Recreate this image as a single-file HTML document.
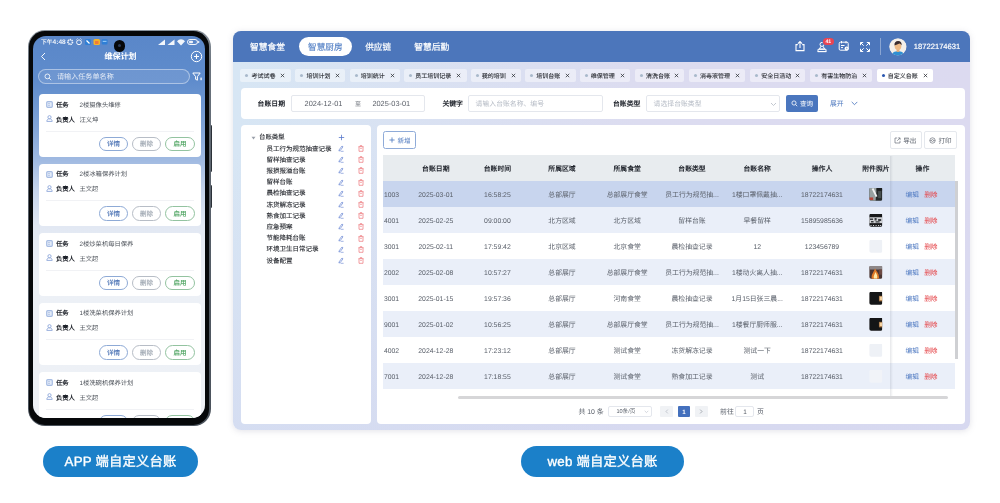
<!DOCTYPE html>
<html lang="zh-CN">
<head>
<meta charset="utf-8">
<title>自定义台账</title>
<style>
*{box-sizing:border-box;margin:0;padding:0}
html,body{width:1000px;height:503px;overflow:hidden;background:#fff;font-family:"Liberation Sans",sans-serif;text-rendering:geometricPrecision;-webkit-font-smoothing:antialiased}
body{position:relative}
.abs{position:absolute}
/* ---------- phone ---------- */
#phone{position:absolute;left:28px;top:30px;width:182.6px;height:396px;border-radius:17px;background:linear-gradient(180deg,#8a939c 0%,#6b747e 8%,#565e68 50%,#4a525b 100%);}
#bezel{position:absolute;left:1.2px;top:1.4px;right:1.2px;bottom:1.4px;border-radius:15.8px;background:#06080a}
#screen{position:absolute;left:5px;top:6px;width:172px;height:382px;border-radius:13px;overflow:hidden;
 background:linear-gradient(180deg,#5a87c9 0px,#5f8ccc 45px,#6a94d0 62px,#84a6d8 95px,#9fb9e1 123px,#c6d4eb 155px,#e2e8f3 190px,#ecf0f6 240px,#eef1f6 382px);}
#screen .t{position:absolute;white-space:nowrap;line-height:1;z-index:2}
#screen,#web,.pill{will-change:transform}
.card{position:absolute;left:6px;width:162.4px;height:62.5px;background:#fff;border-radius:4px;}
.card .t{position:absolute;white-space:nowrap;line-height:1;font-size:6.3px}
.card .lb{font-weight:bold;color:#1d2129;left:17px}
.card .vl{color:#5a6068;left:40.5px}
.card .dv{position:absolute;left:7px;right:7.5px;top:36.7px;height:1px;background:#f1f2f5}
.pb{position:absolute;top:42.5px;height:14.5px;border-radius:8px;border:1px solid;background:#fff}
.pb.b1{left:59.9px;width:29.3px;border-color:#8eaad6;color:#4a72b4}
.pb.b2{left:93px;width:29px;border-color:#b7bdc6;color:#9aa3ae}
.pb.b3{left:126px;width:30px;border-color:#93c3a0;color:#46a05a}
.pill{position:absolute;height:31px;border-radius:16px;background:#1b80c9;color:#fff;font-size:13.3px;text-align:center;line-height:31px;letter-spacing:0.2px;-webkit-text-stroke:.35px #fff}
/* ---------- web ---------- */
#web{position:absolute;left:233px;top:31px;width:737px;height:398.5px;border-radius:8px;overflow:hidden;
 background:linear-gradient(180deg,rgba(212,216,240,0) 30%,rgba(212,216,240,.62) 100%),linear-gradient(90deg,#d7e6f4 0%,#dcdcf0 55%,#dcdaf0 100%);box-shadow:0 1px 6px rgba(125,125,150,.22)}
#whead{position:absolute;left:0;top:0;width:100%;height:31px;background:#4c76bb}
#web .t{position:absolute;white-space:nowrap;line-height:1}
.nav{color:#fff;font-size:8.8px;top:11.5px}
.chip{position:absolute;top:37.6px;height:13.2px;border-radius:2px;background:rgba(255,255,255,.45);font-size:5.8px;color:#3a3f48;line-height:13px;white-space:nowrap}
.chip i{position:absolute;left:5.1px;top:5.2px;width:3px;height:3px;border-radius:50%;background:#a9b9cb}
.chip span{position:absolute;left:11.2px;top:1.1px}
.chip svg{position:absolute;right:5.2px;top:4px}
.wcard{position:absolute;background:#fff;border-radius:4px}
.flb{font-weight:bold;font-size:6.6px;color:#1d2129}
.inp{position:absolute;border:1px solid #e4e7ed;border-radius:2px;background:#fff}
.ph{color:#b4bac4;font-size:6px}
.tree{font-size:6.4px;color:#23262c;-webkit-text-stroke:.1px #23262c}
.th{font-weight:bold;font-size:6.8px;color:#1d2129;text-align:center}
.row{position:absolute;left:6.5px;width:572px;height:26px}
.row .c{position:absolute;top:9.5px;font-size:6.9px;color:#5b616b;line-height:1;white-space:nowrap;text-align:center;transform:translateX(-50%)}
.row .id{position:absolute;left:0;top:9.5px;font-size:6.9px;color:#5b616b;line-height:1}
.row .ed{position:absolute;left:529px;top:9.5px;font-size:6.4px;color:#4a76c0;line-height:1}
.row .de{position:absolute;left:547.5px;top:9.5px;font-size:6.4px;color:#e5474b;line-height:1}
.thumb{position:absolute;left:485.5px;top:6px;width:14px;height:14px;border-radius:1.5px;overflow:hidden}
</style>
</head>
<body>

<!-- ================= PHONE ================= -->
<div id="sidebtn" style="position:absolute;left:209px;top:125px;width:2.9px;height:47px;border-radius:1.2px;background:#2b3138"></div>
<div style="position:absolute;left:209px;top:185px;width:2.9px;height:23px;border-radius:1.2px;background:#2b3138"></div>
<div id="phone">
 <div id="bezel"></div>
 <div id="screen">
  <div id="pcontent">
<div class="t" style="left:8.0px;top:4.0px;font-size:5.80px;color:#fff;font-weight:bold;opacity:.92">下午<span style="font-size:6.5px">4:48</span></div>
<svg class="abs" style="left:33px;top:2.2px" width="45" height="8" viewBox="0 0 45 8">
<circle cx="4.2" cy="4" r="2.3" fill="none" stroke="#fff" stroke-width="1.7" stroke-dasharray="1.3 0.55" opacity=".9"/>
<circle cx="13" cy="4.3" r="2.4" fill="none" stroke="#fff" stroke-width="1" opacity=".9"/><path d="M10.5 1.5l1-1M15.5 1.5l-1-1" stroke="#fff" stroke-width=".9" opacity=".9"/>
<rect x="19" y="1" width="6" height="6" rx="1.5" fill="#2f7fd6"/><path d="M20.5 2.5l3 3" stroke="#fff" stroke-width="1.2"/>
<rect x="27.5" y="1" width="6.5" height="6" rx="1.5" fill="#f4b428"/><rect x="29" y="3" width="3.5" height="3" fill="#f07a3a"/>
<rect x="35.700" y="1.2" width="5.800" height="5.300" rx="1" fill="#2f7fd6"/><rect x="36.700" y="2.800" width="3.800" height="1.200" fill="#8cc4f5"/>
</svg>
<svg class="abs" style="left:124px;top:1.8px" width="44" height="8" viewBox="0 0 44 8">
<path d="M1 7h7V1.5z" fill="#fff" opacity=".92"/><path d="M10.5 7h7V1.5z" fill="#fff" opacity=".92"/>
<path d="M20 3.2a5.2 5.2 0 0 1 8 0l-4 4.3z" fill="#fff" opacity=".92"/>
<rect x="30.5" y="1.5" width="10" height="5" rx="2.5" fill="none" stroke="#fff" stroke-width="1" opacity=".92"/><rect x="32" y="2.8" width="4" height="2.4" rx="1" fill="#fff" opacity=".9"/><rect x="41.2" y="3" width="1" height="2" fill="#fff"/>
</svg>
<div class="abs" style="left:80.5px;top:4px;width:11.5px;height:11.5px;border-radius:50%;background:#05070a"></div>
<div class="abs" style="left:84.7px;top:8.2px;width:3px;height:3px;border-radius:50%;background:#2a3a55"></div>
<svg class="abs" style="left:7px;top:16px" width="7" height="9" viewBox="0 0 7 9"><path d="M5 1L1.5 4.5 5 8" fill="none" stroke="#fff" stroke-width="1" opacity=".95"/></svg>
<div class="t" style="left:87.5px;top:17.0px;font-size:8.00px;transform:translateX(-50%);color:#fff;font-weight:bold">维保计划</div>
<svg class="abs" style="left:157px;top:13.7px" width="13" height="13" viewBox="0 0 13 13"><circle cx="6.5" cy="6.5" r="5.2" fill="none" stroke="#fff" stroke-width="1"/><path d="M6.5 4v5M4 6.5h5" stroke="#fff" stroke-width="1.1"/></svg>
<div class="abs" style="left:5px;top:32.5px;width:152px;height:15.5px;border-radius:8px;border:1px solid rgba(255,255,255,.42);background:rgba(255,255,255,.10)"></div>
<svg class="abs" style="left:11px;top:36.5px" width="8" height="8" viewBox="0 0 8 8"><circle cx="3.4" cy="3.4" r="2.4" fill="none" stroke="#fff" stroke-width=".9" opacity=".9"/><path d="M5.2 5.2l2 2" stroke="#fff" stroke-width=".9" opacity=".9"/></svg>
<div class="t" style="left:24.0px;top:38.0px;font-size:7.10px;color:#fff;opacity:.8">请输入任务单名称</div>
<svg class="abs" style="left:158.5px;top:35.5px" width="11" height="10" viewBox="0 0 11 10"><path d="M0.8 1h7.4L5.4 4.6v3.6l-1.8-.9V4.6z" fill="none" stroke="#fff" stroke-width="1" stroke-linejoin="round"/><rect x="8.3" y="5.6" width="1.6" height="2.6" fill="#fff" opacity=".8"/></svg>
<div class="card" style="top:58.0px"><svg class="abs" style="left:7px;top:7px" width="7" height="7" viewBox="0 0 7 7"><rect x=".7" y=".7" width="5.600" height="5.600" rx="1" fill="#e3ebf8" stroke="#a6bce3" stroke-width="1.200"/><path d="M2.300 2.600h1.400M2.300 4.400h1.400" stroke="#8aa5d6" stroke-width=".7"/></svg><svg class="abs" style="left:7px;top:21.3px" width="7" height="7" viewBox="0 0 7 7"><circle cx="3.5" cy="2.2" r="1.600" fill="none" stroke="#93acdc" stroke-width=".95"/><path d="M.8 6.400c.2-2 1.200-2.600 2.700-2.600s2.500.6 2.700 2.600z" fill="none" stroke="#93acdc" stroke-width=".95"/></svg><div class="dv"></div><div class="pb b1"></div><div class="pb b2"></div><div class="pb b3"></div></div>
<div class="t" style="left:23.0px;top:67.0px;font-size:6.30px;font-weight:bold;color:#1d2129">任务</div>
<div class="t" style="left:46.5px;top:67.0px;font-size:6.30px;color:#4b5058">2楼摄像头维修</div>
<div class="t" style="left:23.0px;top:82.0px;font-size:6.30px;font-weight:bold;color:#1d2129">负责人</div>
<div class="t" style="left:46.5px;top:82.0px;font-size:6.30px;color:#4b5058">汪义坤</div>
<div class="t" style="left:80.4px;top:106.0px;font-size:6.50px;transform:translateX(-50%);color:#4a72b4;-webkit-text-stroke:.15px #4a72b4">详情</div>
<div class="t" style="left:113.5px;top:106.0px;font-size:6.50px;transform:translateX(-50%);color:#98a1ac;-webkit-text-stroke:.12px #98a1ac">删除</div>
<div class="t" style="left:147.0px;top:106.0px;font-size:6.50px;transform:translateX(-50%);color:#46a05a;-webkit-text-stroke:.15px #46a05a">启用</div>
<div class="card" style="top:127.5px"><svg class="abs" style="left:7px;top:7px" width="7" height="7" viewBox="0 0 7 7"><rect x=".7" y=".7" width="5.600" height="5.600" rx="1" fill="#e3ebf8" stroke="#a6bce3" stroke-width="1.200"/><path d="M2.300 2.600h1.400M2.300 4.400h1.400" stroke="#8aa5d6" stroke-width=".7"/></svg><svg class="abs" style="left:7px;top:21.3px" width="7" height="7" viewBox="0 0 7 7"><circle cx="3.5" cy="2.2" r="1.600" fill="none" stroke="#93acdc" stroke-width=".95"/><path d="M.8 6.400c.2-2 1.200-2.600 2.700-2.600s2.500.6 2.700 2.600z" fill="none" stroke="#93acdc" stroke-width=".95"/></svg><div class="dv"></div><div class="pb b1"></div><div class="pb b2"></div><div class="pb b3"></div></div>
<div class="t" style="left:23.0px;top:136.0px;font-size:6.30px;font-weight:bold;color:#1d2129">任务</div>
<div class="t" style="left:46.5px;top:136.0px;font-size:6.30px;color:#4b5058">2楼冰箱保养计划</div>
<div class="t" style="left:23.0px;top:151.0px;font-size:6.30px;font-weight:bold;color:#1d2129">负责人</div>
<div class="t" style="left:46.5px;top:151.0px;font-size:6.30px;color:#4b5058">王文超</div>
<div class="t" style="left:80.4px;top:176.0px;font-size:6.50px;transform:translateX(-50%);color:#4a72b4;-webkit-text-stroke:.15px #4a72b4">详情</div>
<div class="t" style="left:113.5px;top:176.0px;font-size:6.50px;transform:translateX(-50%);color:#98a1ac;-webkit-text-stroke:.12px #98a1ac">删除</div>
<div class="t" style="left:147.0px;top:176.0px;font-size:6.50px;transform:translateX(-50%);color:#46a05a;-webkit-text-stroke:.15px #46a05a">启用</div>
<div class="card" style="top:197.0px"><svg class="abs" style="left:7px;top:7px" width="7" height="7" viewBox="0 0 7 7"><rect x=".7" y=".7" width="5.600" height="5.600" rx="1" fill="#e3ebf8" stroke="#a6bce3" stroke-width="1.200"/><path d="M2.300 2.600h1.400M2.300 4.400h1.400" stroke="#8aa5d6" stroke-width=".7"/></svg><svg class="abs" style="left:7px;top:21.3px" width="7" height="7" viewBox="0 0 7 7"><circle cx="3.5" cy="2.2" r="1.600" fill="none" stroke="#93acdc" stroke-width=".95"/><path d="M.8 6.400c.2-2 1.200-2.600 2.700-2.600s2.500.6 2.700 2.600z" fill="none" stroke="#93acdc" stroke-width=".95"/></svg><div class="dv"></div><div class="pb b1"></div><div class="pb b2"></div><div class="pb b3"></div></div>
<div class="t" style="left:23.0px;top:206.0px;font-size:6.30px;font-weight:bold;color:#1d2129">任务</div>
<div class="t" style="left:46.5px;top:206.0px;font-size:6.30px;color:#4b5058">2楼炒菜机每日保养</div>
<div class="t" style="left:23.0px;top:221.0px;font-size:6.30px;font-weight:bold;color:#1d2129">负责人</div>
<div class="t" style="left:46.5px;top:221.0px;font-size:6.30px;color:#4b5058">王文超</div>
<div class="t" style="left:80.4px;top:245.0px;font-size:6.50px;transform:translateX(-50%);color:#4a72b4;-webkit-text-stroke:.15px #4a72b4">详情</div>
<div class="t" style="left:113.5px;top:245.0px;font-size:6.50px;transform:translateX(-50%);color:#98a1ac;-webkit-text-stroke:.12px #98a1ac">删除</div>
<div class="t" style="left:147.0px;top:245.0px;font-size:6.50px;transform:translateX(-50%);color:#46a05a;-webkit-text-stroke:.15px #46a05a">启用</div>
<div class="card" style="top:266.5px"><svg class="abs" style="left:7px;top:7px" width="7" height="7" viewBox="0 0 7 7"><rect x=".7" y=".7" width="5.600" height="5.600" rx="1" fill="#e3ebf8" stroke="#a6bce3" stroke-width="1.200"/><path d="M2.300 2.600h1.400M2.300 4.400h1.400" stroke="#8aa5d6" stroke-width=".7"/></svg><svg class="abs" style="left:7px;top:21.3px" width="7" height="7" viewBox="0 0 7 7"><circle cx="3.5" cy="2.2" r="1.600" fill="none" stroke="#93acdc" stroke-width=".95"/><path d="M.8 6.400c.2-2 1.200-2.600 2.700-2.600s2.500.6 2.700 2.600z" fill="none" stroke="#93acdc" stroke-width=".95"/></svg><div class="dv"></div><div class="pb b1"></div><div class="pb b2"></div><div class="pb b3"></div></div>
<div class="t" style="left:23.0px;top:275.0px;font-size:6.30px;font-weight:bold;color:#1d2129">任务</div>
<div class="t" style="left:46.5px;top:275.0px;font-size:6.30px;color:#4b5058">1楼洗菜机保养计划</div>
<div class="t" style="left:23.0px;top:290.0px;font-size:6.30px;font-weight:bold;color:#1d2129">负责人</div>
<div class="t" style="left:46.5px;top:290.0px;font-size:6.30px;color:#4b5058">王文超</div>
<div class="t" style="left:80.4px;top:315.0px;font-size:6.50px;transform:translateX(-50%);color:#4a72b4;-webkit-text-stroke:.15px #4a72b4">详情</div>
<div class="t" style="left:113.5px;top:315.0px;font-size:6.50px;transform:translateX(-50%);color:#98a1ac;-webkit-text-stroke:.12px #98a1ac">删除</div>
<div class="t" style="left:147.0px;top:315.0px;font-size:6.50px;transform:translateX(-50%);color:#46a05a;-webkit-text-stroke:.15px #46a05a">启用</div>
<div class="card" style="top:336.0px"><svg class="abs" style="left:7px;top:7px" width="7" height="7" viewBox="0 0 7 7"><rect x=".7" y=".7" width="5.600" height="5.600" rx="1" fill="#e3ebf8" stroke="#a6bce3" stroke-width="1.200"/><path d="M2.300 2.600h1.400M2.300 4.400h1.400" stroke="#8aa5d6" stroke-width=".7"/></svg><svg class="abs" style="left:7px;top:21.3px" width="7" height="7" viewBox="0 0 7 7"><circle cx="3.5" cy="2.2" r="1.600" fill="none" stroke="#93acdc" stroke-width=".95"/><path d="M.8 6.400c.2-2 1.200-2.600 2.700-2.600s2.500.6 2.700 2.600z" fill="none" stroke="#93acdc" stroke-width=".95"/></svg><div class="dv"></div><div class="pb b1"></div><div class="pb b2"></div><div class="pb b3"></div></div>
<div class="t" style="left:23.0px;top:345.0px;font-size:6.30px;font-weight:bold;color:#1d2129">任务</div>
<div class="t" style="left:46.5px;top:345.0px;font-size:6.30px;color:#4b5058">1楼洗碗机保养计划</div>
<div class="t" style="left:23.0px;top:360.0px;font-size:6.30px;font-weight:bold;color:#1d2129">负责人</div>
<div class="t" style="left:46.5px;top:360.0px;font-size:6.30px;color:#4b5058">王文超</div>
</div><!--/pcontent-->
 </div>
</div>
<div class="pill" style="left:42.5px;top:446px;width:155px">APP 端自定义台账</div>

<!-- ================= WEB ================= -->
<div id="web">
<div id="whead"></div>
<div class="t " style="left:17.0px;top:12.0px;font-size:8.75px;color:#fff;-webkit-text-stroke:.2px #fff">智慧食堂</div>
<div class="abs" style="left:65.5px;top:6.4px;width:53px;height:19px;border-radius:10px;background:#fff"></div>
<div class="t " style="left:75.0px;top:12.0px;font-size:8.65px;color:#5b86c8;-webkit-text-stroke:.15px #5b86c8">智慧厨房</div>
<div class="t " style="left:132.2px;top:12.0px;font-size:8.65px;color:#fff;-webkit-text-stroke:.2px #fff">供应链</div>
<div class="t " style="left:181.2px;top:12.0px;font-size:8.75px;color:#fff;-webkit-text-stroke:.2px #fff">智慧后勤</div>
<svg class="abs" style="left:561.0px;top:9.0px" width="12" height="12" viewBox="0 0 12 12"><path d="M3.8 4.6H2v6h8v-6H8.2" fill="none" stroke="#fff" stroke-width="1.1"/><path d="M6 8V1.6M3.9 3.6L6 1.5l2.1 2.1" fill="none" stroke="#fff" stroke-width="1.1"/></svg>
<svg class="abs" style="left:582.5px;top:9.5px" width="12" height="12" viewBox="0 0 12 12"><circle cx="6" cy="3.4" r="2" fill="none" stroke="#fff" stroke-width="1"/><path d="M5 5.2L3.4 8h5.2L7 5.2" fill="none" stroke="#fff" stroke-width="1"/><path d="M1.5 10.6h9M2 8.3h8v2.3H2z" fill="none" stroke="#fff" stroke-width="1"/></svg>
<div class="abs" style="left:590.0px;top:6.5px;width:10.6px;height:7.4px;border-radius:3.7px;background:#ea4452;box-shadow:0 0 0 .6px #4c76bb"></div>
<div class="t " style="left:595.3px;top:9.0px;font-size:5.20px;transform:translateX(-50%);color:#fff;font-weight:bold">41</div>
<svg class="abs" style="left:604.8px;top:9.1px" width="12" height="12" viewBox="0 0 12 12"><rect x="1.2" y="2.2" width="9" height="8" rx="1.2" fill="none" stroke="#fff" stroke-width="1"/><path d="M3.5 1v2.4M8 1v2.4M3 5.5h3.5M3 7.6h2" stroke="#fff" stroke-width="1"/><circle cx="8.6" cy="8.6" r="2" fill="#fff"/><path d="M8.6 7.7v1h.8" stroke="#4c76bb" stroke-width=".6" fill="none"/></svg>
<svg class="abs" style="left:626.2px;top:9.5px" width="12" height="12" viewBox="0 0 12 12"><path d="M1.5 4.2V1.5h2.7M7.8 1.5h2.7v2.7M10.5 7.8v2.7H7.8M4.2 10.5H1.5V7.8" fill="none" stroke="#fff" stroke-width="1"/><path d="M1.7 1.7l3 3M10.3 1.7l-3 3M10.3 10.3l-3-3M1.7 10.3l3-3" stroke="#fff" stroke-width="1"/></svg>
<div class="abs" style="left:647.0px;top:7.0px;width:1px;height:17px;background:rgba(255,255,255,.35)"></div>
<svg class="abs" style="left:655.8px;top:6.6px;clip-path:circle(8.800px at 9px 9px)" width="18" height="18" viewBox="0 0 18 18"><circle cx="9" cy="9" r="8.8" fill="#f4efe9"/><g><path d="M2.5 18.5c0-4 3-5.2 6.5-5.2s6.5 1.2 6.5 5.2z" fill="#2f8fd2"/><rect x="7.6" y="10.5" width="2.8" height="3.4" fill="#e6ad78"/><ellipse cx="9" cy="8.2" rx="3.3" ry="3.8" fill="#edb985"/><path d="M5.5 7.6c-.4-3 1.2-4.6 3.6-4.6 2.6 0 4 1.700 3.500 4.600-.5-1.300-1.200-2-2.200-2.200-1.300.7-3.300 1-4.900 2.200z" fill="#3a2c2e"/></g></svg>
<div class="t " style="left:680.8px;top:12.0px;font-size:7.60px;color:#fff;-webkit-text-stroke:.18px #fff">18722174631</div>
<div class="chip" style="left:7.4px;width:50.2px;"><i></i><svg width="5" height="5" viewBox="0 0 5 5"><path d="M.8 .8l3.400 3.400M4.200 .8L.8 4.200" stroke="#2a2d33" stroke-width=".75"/></svg></div>
<div class="t " style="left:18.6px;top:43.0px;font-size:6.00px;color:#22252b;-webkit-text-stroke:.08px #22252b">考试试卷</div>
<div class="chip" style="left:62.2px;width:50.2px;"><i></i><svg width="5" height="5" viewBox="0 0 5 5"><path d="M.8 .8l3.400 3.400M4.200 .8L.8 4.200" stroke="#2a2d33" stroke-width=".75"/></svg></div>
<div class="t " style="left:73.4px;top:43.0px;font-size:6.00px;color:#22252b;-webkit-text-stroke:.08px #22252b">培训计划</div>
<div class="chip" style="left:116.6px;width:50.4px;"><i></i><svg width="5" height="5" viewBox="0 0 5 5"><path d="M.8 .8l3.400 3.400M4.200 .8L.8 4.200" stroke="#2a2d33" stroke-width=".75"/></svg></div>
<div class="t " style="left:127.8px;top:43.0px;font-size:6.00px;color:#22252b;-webkit-text-stroke:.08px #22252b">培训统计</div>
<div class="chip" style="left:171.0px;width:62.6px;"><i></i><svg width="5" height="5" viewBox="0 0 5 5"><path d="M.8 .8l3.400 3.400M4.200 .8L.8 4.200" stroke="#2a2d33" stroke-width=".75"/></svg></div>
<div class="t " style="left:182.2px;top:43.0px;font-size:6.00px;color:#22252b;-webkit-text-stroke:.08px #22252b">员工培训记录</div>
<div class="chip" style="left:237.6px;width:50.4px;"><i></i><svg width="5" height="5" viewBox="0 0 5 5"><path d="M.8 .8l3.400 3.400M4.200 .8L.8 4.200" stroke="#2a2d33" stroke-width=".75"/></svg></div>
<div class="t " style="left:248.8px;top:43.0px;font-size:6.00px;color:#22252b;-webkit-text-stroke:.08px #22252b">我的培训</div>
<div class="chip" style="left:292.0px;width:50.6px;"><i></i><svg width="5" height="5" viewBox="0 0 5 5"><path d="M.8 .8l3.400 3.400M4.200 .8L.8 4.200" stroke="#2a2d33" stroke-width=".75"/></svg></div>
<div class="t " style="left:303.2px;top:43.0px;font-size:6.00px;color:#22252b;-webkit-text-stroke:.08px #22252b">培训台账</div>
<div class="chip" style="left:346.6px;width:50.4px;"><i></i><svg width="5" height="5" viewBox="0 0 5 5"><path d="M.8 .8l3.400 3.400M4.200 .8L.8 4.200" stroke="#2a2d33" stroke-width=".75"/></svg></div>
<div class="t " style="left:357.8px;top:43.0px;font-size:6.00px;color:#22252b;-webkit-text-stroke:.08px #22252b">维保管理</div>
<div class="chip" style="left:401.8px;width:49.2px;"><i></i><svg width="5" height="5" viewBox="0 0 5 5"><path d="M.8 .8l3.400 3.400M4.200 .8L.8 4.200" stroke="#2a2d33" stroke-width=".75"/></svg></div>
<div class="t " style="left:413.0px;top:43.0px;font-size:6.00px;color:#22252b;-webkit-text-stroke:.08px #22252b">清洗台账</div>
<div class="chip" style="left:455.8px;width:56.0px;"><i></i><svg width="5" height="5" viewBox="0 0 5 5"><path d="M.8 .8l3.400 3.400M4.200 .8L.8 4.200" stroke="#2a2d33" stroke-width=".75"/></svg></div>
<div class="t " style="left:467.0px;top:43.0px;font-size:6.00px;color:#22252b;-webkit-text-stroke:.08px #22252b">消毒液管理</div>
<div class="chip" style="left:517.0px;width:55.0px;"><i></i><svg width="5" height="5" viewBox="0 0 5 5"><path d="M.8 .8l3.400 3.400M4.200 .8L.8 4.200" stroke="#2a2d33" stroke-width=".75"/></svg></div>
<div class="t " style="left:528.2px;top:43.0px;font-size:6.00px;color:#22252b;-webkit-text-stroke:.08px #22252b">安全日活动</div>
<div class="chip" style="left:577.0px;width:62.0px;"><i></i><svg width="5" height="5" viewBox="0 0 5 5"><path d="M.8 .8l3.400 3.400M4.200 .8L.8 4.200" stroke="#2a2d33" stroke-width=".75"/></svg></div>
<div class="t " style="left:588.2px;top:43.0px;font-size:6.00px;color:#22252b;-webkit-text-stroke:.08px #22252b">有害生物防治</div>
<div class="chip" style="left:643.6px;width:56.4px;background:#fff;"><i style="background:#2a57b0"></i><svg width="5" height="5" viewBox="0 0 5 5"><path d="M.8 .8l3.400 3.400M4.200 .8L.8 4.200" stroke="#2a2d33" stroke-width=".75"/></svg></div>
<div class="t " style="left:654.8px;top:43.0px;font-size:6.00px;color:#22252b;-webkit-text-stroke:.08px #22252b">自定义台账</div>
<div class="wcard" style="left:7.5px;top:57.2px;width:724.5px;height:30.4px"></div>
<div class="t flb" style="left:24.6px;top:71.0px;font-size:6.85px;">台账日期</div>
<div class="inp" style="left:57.6px;top:64.0px;width:134px;height:16.6px"></div>
<div class="t " style="left:71.6px;top:69.0px;font-size:7.40px;color:#5a5f68">2024-12-01</div>
<div class="t " style="left:125.0px;top:71.0px;font-size:6.00px;transform:translateX(-50%);color:#70757d">至</div>
<div class="t " style="left:139.4px;top:69.0px;font-size:7.40px;color:#5a5f68">2025-03-01</div>
<div class="t flb" style="left:209.4px;top:71.0px;font-size:6.85px;">关键字</div>
<div class="inp" style="left:235.4px;top:64.0px;width:134.6px;height:16.6px"></div>
<div class="t ph" style="left:242.6px;top:71.0px;font-size:6.85px;">请输入台账名称、编号</div>
<div class="t flb" style="left:380.0px;top:71.0px;font-size:6.85px;">台账类型</div>
<div class="inp" style="left:413.2px;top:64.0px;width:134.2px;height:16.6px"></div>
<div class="t ph" style="left:420.6px;top:71.0px;font-size:6.85px;">请选择台账类型</div>
<svg class="abs" style="left:537.0px;top:70.6px" width="7" height="5" viewBox="0 0 7 5"><path d="M1 1l2.500 2.500L6 1" fill="none" stroke="#b4bac4" stroke-width=".8"/></svg>
<div class="abs" style="left:553.4px;top:64.0px;width:32px;height:16.6px;border-radius:2px;background:#4a76be"></div>
<svg class="abs" style="left:558.0px;top:69.2px" width="7" height="7" viewBox="0 0 7 7"><circle cx="3" cy="3" r="2.1" fill="none" stroke="#fff" stroke-width=".8"/><path d="M4.6 4.6l1.6 1.600" stroke="#fff" stroke-width=".8"/></svg>
<div class="t " style="left:567.0px;top:71.0px;font-size:6.60px;color:#fff">查询</div>
<div class="t " style="left:597.0px;top:71.0px;font-size:6.80px;color:#4a76be">展开</div>
<svg class="abs" style="left:617.5px;top:70.4px" width="7" height="5" viewBox="0 0 7 5"><path d="M.7 .9L3.500 3.700 6.300 .9" fill="none" stroke="#4a76be" stroke-width=".85"/></svg>
<div class="wcard" style="left:7.5px;top:94.0px;width:130.5px;height:299px"></div>
<svg class="abs" style="left:17.7px;top:104.6px" width="5" height="4" viewBox="0 0 5 4"><path d="M.5 .7h4L2.500 3.400z" fill="#9aa0aa"/></svg>
<div class="t tree" style="left:26.0px;top:104.0px;font-size:6.40px;">台账类型</div>
<svg class="abs" style="left:105.0px;top:103.0px" width="7" height="7" viewBox="0 0 7 7"><path d="M3.500 .8v5.400M.8 3.500h5.400" stroke="#5878cc" stroke-width=".8"/></svg>
<div class="t tree" style="left:33.6px;top:116.0px;font-size:6.50px;">员工行为规范抽查记录</div>
<svg class="abs" style="left:105.2px;top:113.9px" width="6" height="7" viewBox="0 0 6 7"><path d="M1.200 4.800L4 1l1 .8-2.800 3.800-1.300.4z" fill="none" stroke="#5273cc" stroke-width=".62" stroke-linejoin="round"/><path d="M2.600 6.300h3" stroke="#5273cc" stroke-width=".55"/></svg>
<svg class="abs" style="left:124.6px;top:113.9px" width="6" height="7" viewBox="0 0 6 7"><path d="M.4 1.700h5.200M2.200 1.600V.6h1.600v1" fill="none" stroke="#e8595d" stroke-width=".58"/><path d="M1 1.800v4.500h4V1.800" fill="none" stroke="#e8595d" stroke-width=".58"/><path d="M2.200 3.500h1.600" stroke="#e8595d" stroke-width=".5"/></svg>
<div class="t tree" style="left:33.6px;top:127.0px;font-size:6.50px;">留样抽查记录</div>
<svg class="abs" style="left:105.2px;top:125.1px" width="6" height="7" viewBox="0 0 6 7"><path d="M1.200 4.800L4 1l1 .8-2.800 3.800-1.300.4z" fill="none" stroke="#5273cc" stroke-width=".62" stroke-linejoin="round"/><path d="M2.600 6.300h3" stroke="#5273cc" stroke-width=".55"/></svg>
<svg class="abs" style="left:124.6px;top:125.1px" width="6" height="7" viewBox="0 0 6 7"><path d="M.4 1.700h5.200M2.200 1.600V.6h1.600v1" fill="none" stroke="#e8595d" stroke-width=".58"/><path d="M1 1.800v4.500h4V1.800" fill="none" stroke="#e8595d" stroke-width=".58"/><path d="M2.200 3.500h1.600" stroke="#e8595d" stroke-width=".5"/></svg>
<div class="t tree" style="left:33.6px;top:138.0px;font-size:6.50px;">报损报溢台账</div>
<svg class="abs" style="left:105.2px;top:136.3px" width="6" height="7" viewBox="0 0 6 7"><path d="M1.200 4.800L4 1l1 .8-2.800 3.800-1.300.4z" fill="none" stroke="#5273cc" stroke-width=".62" stroke-linejoin="round"/><path d="M2.600 6.300h3" stroke="#5273cc" stroke-width=".55"/></svg>
<svg class="abs" style="left:124.6px;top:136.3px" width="6" height="7" viewBox="0 0 6 7"><path d="M.4 1.700h5.200M2.200 1.600V.6h1.600v1" fill="none" stroke="#e8595d" stroke-width=".58"/><path d="M1 1.800v4.500h4V1.800" fill="none" stroke="#e8595d" stroke-width=".58"/><path d="M2.200 3.500h1.600" stroke="#e8595d" stroke-width=".5"/></svg>
<div class="t tree" style="left:33.6px;top:149.0px;font-size:6.50px;">留样台账</div>
<svg class="abs" style="left:105.2px;top:147.5px" width="6" height="7" viewBox="0 0 6 7"><path d="M1.200 4.800L4 1l1 .8-2.800 3.800-1.300.4z" fill="none" stroke="#5273cc" stroke-width=".62" stroke-linejoin="round"/><path d="M2.600 6.300h3" stroke="#5273cc" stroke-width=".55"/></svg>
<svg class="abs" style="left:124.6px;top:147.5px" width="6" height="7" viewBox="0 0 6 7"><path d="M.4 1.700h5.200M2.200 1.600V.6h1.600v1" fill="none" stroke="#e8595d" stroke-width=".58"/><path d="M1 1.800v4.500h4V1.800" fill="none" stroke="#e8595d" stroke-width=".58"/><path d="M2.200 3.500h1.600" stroke="#e8595d" stroke-width=".5"/></svg>
<div class="t tree" style="left:33.6px;top:160.0px;font-size:6.50px;">晨检抽查记录</div>
<svg class="abs" style="left:105.2px;top:158.7px" width="6" height="7" viewBox="0 0 6 7"><path d="M1.200 4.800L4 1l1 .8-2.800 3.800-1.300.4z" fill="none" stroke="#5273cc" stroke-width=".62" stroke-linejoin="round"/><path d="M2.600 6.300h3" stroke="#5273cc" stroke-width=".55"/></svg>
<svg class="abs" style="left:124.6px;top:158.7px" width="6" height="7" viewBox="0 0 6 7"><path d="M.4 1.700h5.200M2.200 1.600V.6h1.600v1" fill="none" stroke="#e8595d" stroke-width=".58"/><path d="M1 1.800v4.500h4V1.800" fill="none" stroke="#e8595d" stroke-width=".58"/><path d="M2.200 3.500h1.600" stroke="#e8595d" stroke-width=".5"/></svg>
<div class="t tree" style="left:33.6px;top:172.0px;font-size:6.50px;">冻货解冻记录</div>
<svg class="abs" style="left:105.2px;top:169.9px" width="6" height="7" viewBox="0 0 6 7"><path d="M1.200 4.800L4 1l1 .8-2.800 3.800-1.300.4z" fill="none" stroke="#5273cc" stroke-width=".62" stroke-linejoin="round"/><path d="M2.600 6.300h3" stroke="#5273cc" stroke-width=".55"/></svg>
<svg class="abs" style="left:124.6px;top:169.9px" width="6" height="7" viewBox="0 0 6 7"><path d="M.4 1.700h5.200M2.200 1.600V.6h1.600v1" fill="none" stroke="#e8595d" stroke-width=".58"/><path d="M1 1.800v4.500h4V1.800" fill="none" stroke="#e8595d" stroke-width=".58"/><path d="M2.200 3.500h1.600" stroke="#e8595d" stroke-width=".5"/></svg>
<div class="t tree" style="left:33.6px;top:183.0px;font-size:6.50px;">熟食加工记录</div>
<svg class="abs" style="left:105.2px;top:181.1px" width="6" height="7" viewBox="0 0 6 7"><path d="M1.200 4.800L4 1l1 .8-2.800 3.800-1.300.4z" fill="none" stroke="#5273cc" stroke-width=".62" stroke-linejoin="round"/><path d="M2.600 6.300h3" stroke="#5273cc" stroke-width=".55"/></svg>
<svg class="abs" style="left:124.6px;top:181.1px" width="6" height="7" viewBox="0 0 6 7"><path d="M.4 1.700h5.200M2.200 1.600V.6h1.600v1" fill="none" stroke="#e8595d" stroke-width=".58"/><path d="M1 1.800v4.500h4V1.800" fill="none" stroke="#e8595d" stroke-width=".58"/><path d="M2.200 3.500h1.600" stroke="#e8595d" stroke-width=".5"/></svg>
<div class="t tree" style="left:33.6px;top:194.0px;font-size:6.50px;">应急预案</div>
<svg class="abs" style="left:105.2px;top:192.3px" width="6" height="7" viewBox="0 0 6 7"><path d="M1.200 4.800L4 1l1 .8-2.800 3.800-1.300.4z" fill="none" stroke="#5273cc" stroke-width=".62" stroke-linejoin="round"/><path d="M2.600 6.300h3" stroke="#5273cc" stroke-width=".55"/></svg>
<svg class="abs" style="left:124.6px;top:192.3px" width="6" height="7" viewBox="0 0 6 7"><path d="M.4 1.700h5.200M2.200 1.600V.6h1.600v1" fill="none" stroke="#e8595d" stroke-width=".58"/><path d="M1 1.800v4.500h4V1.800" fill="none" stroke="#e8595d" stroke-width=".58"/><path d="M2.200 3.500h1.600" stroke="#e8595d" stroke-width=".5"/></svg>
<div class="t tree" style="left:33.6px;top:205.0px;font-size:6.50px;">节能降耗台账</div>
<svg class="abs" style="left:105.2px;top:203.5px" width="6" height="7" viewBox="0 0 6 7"><path d="M1.200 4.800L4 1l1 .8-2.800 3.800-1.300.4z" fill="none" stroke="#5273cc" stroke-width=".62" stroke-linejoin="round"/><path d="M2.600 6.300h3" stroke="#5273cc" stroke-width=".55"/></svg>
<svg class="abs" style="left:124.6px;top:203.5px" width="6" height="7" viewBox="0 0 6 7"><path d="M.4 1.700h5.200M2.200 1.600V.6h1.600v1" fill="none" stroke="#e8595d" stroke-width=".58"/><path d="M1 1.800v4.500h4V1.800" fill="none" stroke="#e8595d" stroke-width=".58"/><path d="M2.200 3.500h1.600" stroke="#e8595d" stroke-width=".5"/></svg>
<div class="t tree" style="left:33.6px;top:216.0px;font-size:6.50px;">环境卫生日常记录</div>
<svg class="abs" style="left:105.2px;top:214.7px" width="6" height="7" viewBox="0 0 6 7"><path d="M1.200 4.800L4 1l1 .8-2.800 3.800-1.300.4z" fill="none" stroke="#5273cc" stroke-width=".62" stroke-linejoin="round"/><path d="M2.600 6.300h3" stroke="#5273cc" stroke-width=".55"/></svg>
<svg class="abs" style="left:124.6px;top:214.7px" width="6" height="7" viewBox="0 0 6 7"><path d="M.4 1.700h5.200M2.200 1.600V.6h1.600v1" fill="none" stroke="#e8595d" stroke-width=".58"/><path d="M1 1.800v4.500h4V1.800" fill="none" stroke="#e8595d" stroke-width=".58"/><path d="M2.200 3.500h1.600" stroke="#e8595d" stroke-width=".5"/></svg>
<div class="t tree" style="left:33.6px;top:228.0px;font-size:6.50px;">设备配置</div>
<svg class="abs" style="left:105.2px;top:225.9px" width="6" height="7" viewBox="0 0 6 7"><path d="M1.200 4.800L4 1l1 .8-2.800 3.800-1.300.4z" fill="none" stroke="#5273cc" stroke-width=".62" stroke-linejoin="round"/><path d="M2.600 6.300h3" stroke="#5273cc" stroke-width=".55"/></svg>
<svg class="abs" style="left:124.6px;top:225.9px" width="6" height="7" viewBox="0 0 6 7"><path d="M.4 1.700h5.200M2.200 1.600V.6h1.600v1" fill="none" stroke="#e8595d" stroke-width=".58"/><path d="M1 1.800v4.500h4V1.800" fill="none" stroke="#e8595d" stroke-width=".58"/><path d="M2.200 3.500h1.600" stroke="#e8595d" stroke-width=".5"/></svg>
<div class="wcard" style="left:144.0px;top:94.0px;width:588px;height:299px"></div>
<div class="abs" style="left:150.4px;top:100.4px;width:32.8px;height:17.2px;border:1px solid #8fabd8;border-radius:2.500px;background:#fff"></div>
<svg class="abs" style="left:155.6px;top:106.2px" width="6" height="6" viewBox="0 0 6 6"><path d="M3 .4v5.200M.4 3h5.200" stroke="#4a76be" stroke-width=".8"/></svg>
<div class="t " style="left:164.4px;top:108.0px;font-size:6.60px;color:#4a76be">新增</div>
<div class="abs" style="left:656.6px;top:100.4px;width:32px;height:17.2px;border:1px solid #e5e8ed;border-radius:2px;background:#fff"></div>
<svg class="abs" style="left:660.8px;top:106.0px" width="7" height="7" viewBox="0 0 7 7"><path d="M3.200 1H1v5h5V3.800" fill="none" stroke="#6b717b" stroke-width=".7"/><path d="M3.200 3.800L6 1M4.200 .9H6.100v1.900" fill="none" stroke="#6b717b" stroke-width=".7"/></svg>
<div class="t " style="left:670.2px;top:108.0px;font-size:6.60px;color:#5b616b">导出</div>
<div class="abs" style="left:691.4px;top:100.4px;width:32.2px;height:17.2px;border:1px solid #e5e8ed;border-radius:2px;background:#fff"></div>
<svg class="abs" style="left:695.7px;top:106.0px" width="7" height="7" viewBox="0 0 7 7"><circle cx="3.500" cy="3.500" r="2.700" fill="none" stroke="#6b717b" stroke-width=".7"/><circle cx="3.500" cy="3.500" r="1" fill="none" stroke="#6b717b" stroke-width=".6"/><path d="M.8 3.500h1.700M4.500 3.500h1.700" stroke="#6b717b" stroke-width=".6"/></svg>
<div class="t " style="left:705.4px;top:108.0px;font-size:6.60px;color:#5b616b">打印</div>
<div class="abs" style="left:150.4px;top:124.2px;width:571.6px;height:26px;background:#e8ecef"></div>
<div class="t th" style="left:202.8px;top:136.0px;font-size:6.85px;transform:translateX(-50%);">台账日期</div>
<div class="t th" style="left:264.4px;top:136.0px;font-size:6.85px;transform:translateX(-50%);">台账时间</div>
<div class="t th" style="left:329.0px;top:136.0px;font-size:6.85px;transform:translateX(-50%);">所属区域</div>
<div class="t th" style="left:394.2px;top:136.0px;font-size:6.85px;transform:translateX(-50%);">所属食堂</div>
<div class="t th" style="left:459.0px;top:136.0px;font-size:6.85px;transform:translateX(-50%);">台账类型</div>
<div class="t th" style="left:524.2px;top:136.0px;font-size:6.85px;transform:translateX(-50%);">台账名称</div>
<div class="t th" style="left:589.0px;top:136.0px;font-size:6.85px;transform:translateX(-50%);">操作人</div>
<div class="t th" style="left:689.4px;top:136.0px;font-size:6.85px;transform:translateX(-50%);">操作</div>
<div class="abs" style="left:150.4px;top:150.1px;width:574.6px;height:26px;background:#c8d5ee"></div>
<div class="t " style="left:151.0px;top:162.0px;font-size:6.80px;color:#5b616b">1003</div>
<div class="t " style="left:202.8px;top:162.0px;font-size:6.85px;transform:translateX(-50%);color:#5b616b">2025-03-01</div>
<div class="t " style="left:264.4px;top:162.0px;font-size:6.85px;transform:translateX(-50%);color:#5b616b">16:58:25</div>
<div class="t " style="left:329.0px;top:162.0px;font-size:6.85px;transform:translateX(-50%);color:#5b616b">总部展厅</div>
<div class="t " style="left:394.2px;top:162.0px;font-size:6.85px;transform:translateX(-50%);color:#5b616b">总部展厅食堂</div>
<div class="t " style="left:459.0px;top:162.0px;font-size:6.85px;transform:translateX(-50%);color:#5b616b">员工行为规范抽...</div>
<div class="t " style="left:524.2px;top:162.0px;font-size:6.85px;transform:translateX(-50%);color:#5b616b">1楼口罩佩戴抽...</div>
<div class="t " style="left:589.0px;top:162.0px;font-size:6.85px;transform:translateX(-50%);color:#5b616b">18722174631</div>
<svg class="abs" style="left:636.4px;top:156.6px;clip-path:inset(0 round 1.800px)" width="13.2" height="13.2" viewBox="0 0 13 13"><rect width="13" height="13" fill="#272b2b"/><path d="M0 0h7.500L6.500 13H0z" fill="#98a1a1"/><path d="M3.500 .5L7.500 8.500" stroke="#f2f2f2" stroke-width="1.800"/><rect x=".3" y="9.300" width="3.800" height="2.600" fill="#b8453a"/><rect x="9" y="3" width="3" height="7" fill="#485050"/><rect x="7.500" y="0" width="5.500" height="2.500" fill="#1c1f1f"/></svg>
<div class="abs" style="left:150.4px;top:176.1px;width:574.6px;height:26px;background:#eaeff9"></div>
<div class="t " style="left:151.0px;top:188.0px;font-size:6.80px;color:#5b616b">4001</div>
<div class="t " style="left:202.8px;top:188.0px;font-size:6.85px;transform:translateX(-50%);color:#5b616b">2025-02-25</div>
<div class="t " style="left:264.4px;top:188.0px;font-size:6.85px;transform:translateX(-50%);color:#5b616b">09:00:00</div>
<div class="t " style="left:329.0px;top:188.0px;font-size:6.85px;transform:translateX(-50%);color:#5b616b">北方区域</div>
<div class="t " style="left:394.2px;top:188.0px;font-size:6.85px;transform:translateX(-50%);color:#5b616b">北方区域</div>
<div class="t " style="left:459.0px;top:188.0px;font-size:6.85px;transform:translateX(-50%);color:#5b616b">留样台账</div>
<div class="t " style="left:524.2px;top:188.0px;font-size:6.85px;transform:translateX(-50%);color:#5b616b">早餐留样</div>
<div class="t " style="left:589.0px;top:188.0px;font-size:6.85px;transform:translateX(-50%);color:#5b616b">15895985636</div>
<svg class="abs" style="left:636.4px;top:182.6px;clip-path:inset(0 round 1.800px)" width="13.2" height="13.2" viewBox="0 0 13 13"><rect width="13" height="13" fill="#17181a"/><rect x="0" y="3.200" width="13" height="5.800" fill="#cfd1d4"/><path d="M1 4.500h3v1.500H1zM5.500 4h2v2.500h-2zM9 5h3v2H9zM2 7h2.500v1.500H2zM6.500 7.200h4v1.300h-4z" fill="#3a3c40"/><path d="M1.500 10.800h1v1h-1zM4 10.800h1v1H4zM6.500 10.800h1v1h-1zM9 10.800h1v1H9zM11 10.800h1v1h-1z" fill="#e4e5e8"/></svg>
<div class="abs" style="left:150.4px;top:202.1px;width:574.6px;height:26px;background:#fff"></div>
<div class="t " style="left:151.0px;top:214.0px;font-size:6.80px;color:#5b616b">3001</div>
<div class="t " style="left:202.8px;top:214.0px;font-size:6.85px;transform:translateX(-50%);color:#5b616b">2025-02-11</div>
<div class="t " style="left:264.4px;top:214.0px;font-size:6.85px;transform:translateX(-50%);color:#5b616b">17:59:42</div>
<div class="t " style="left:329.0px;top:214.0px;font-size:6.85px;transform:translateX(-50%);color:#5b616b">北京区域</div>
<div class="t " style="left:394.2px;top:214.0px;font-size:6.85px;transform:translateX(-50%);color:#5b616b">北京食堂</div>
<div class="t " style="left:459.0px;top:214.0px;font-size:6.85px;transform:translateX(-50%);color:#5b616b">晨检抽查记录</div>
<div class="t " style="left:524.2px;top:214.0px;font-size:6.85px;transform:translateX(-50%);color:#5b616b">12</div>
<div class="t " style="left:589.0px;top:214.0px;font-size:6.85px;transform:translateX(-50%);color:#5b616b">123456789</div>
<svg class="abs" style="left:636.4px;top:208.6px;clip-path:inset(0 round 1.800px)" width="13.2" height="13.2" viewBox="0 0 13 13"><rect width="13" height="13" fill="#eef1f6"/></svg>
<div class="abs" style="left:150.4px;top:228.1px;width:574.6px;height:26px;background:#eaeff9"></div>
<div class="t " style="left:151.0px;top:240.0px;font-size:6.80px;color:#5b616b">2002</div>
<div class="t " style="left:202.8px;top:240.0px;font-size:6.85px;transform:translateX(-50%);color:#5b616b">2025-02-08</div>
<div class="t " style="left:264.4px;top:240.0px;font-size:6.85px;transform:translateX(-50%);color:#5b616b">10:57:27</div>
<div class="t " style="left:329.0px;top:240.0px;font-size:6.85px;transform:translateX(-50%);color:#5b616b">总部展厅</div>
<div class="t " style="left:394.2px;top:240.0px;font-size:6.85px;transform:translateX(-50%);color:#5b616b">总部展厅食堂</div>
<div class="t " style="left:459.0px;top:240.0px;font-size:6.85px;transform:translateX(-50%);color:#5b616b">员工行为规范抽...</div>
<div class="t " style="left:524.2px;top:240.0px;font-size:6.85px;transform:translateX(-50%);color:#5b616b">1楼动火离人抽...</div>
<div class="t " style="left:589.0px;top:240.0px;font-size:6.85px;transform:translateX(-50%);color:#5b616b">18722174631</div>
<svg class="abs" style="left:636.4px;top:234.6px;clip-path:inset(0 round 1.800px)" width="13.2" height="13.2" viewBox="0 0 13 13"><rect width="13" height="13" fill="#4a3532"/><rect x="0" y="0" width="13" height="3.500" fill="#8d8789"/><path d="M3 13c-1.500-3.500 1-6 3-10.500 1.500 3 5 6 3.500 10.500z" fill="#e07a28"/><path d="M4.800 12.500c-.6-2.500 .6-4 1.700-6.500 .8 2 2.200 3.500 1.500 6.500z" fill="#ffe9a8"/><rect x="10" y="3.500" width="3" height="5" fill="#6d4a44"/></svg>
<div class="abs" style="left:150.4px;top:254.1px;width:574.6px;height:26px;background:#fff"></div>
<div class="t " style="left:151.0px;top:266.0px;font-size:6.80px;color:#5b616b">3001</div>
<div class="t " style="left:202.8px;top:266.0px;font-size:6.85px;transform:translateX(-50%);color:#5b616b">2025-01-15</div>
<div class="t " style="left:264.4px;top:266.0px;font-size:6.85px;transform:translateX(-50%);color:#5b616b">19:57:36</div>
<div class="t " style="left:329.0px;top:266.0px;font-size:6.85px;transform:translateX(-50%);color:#5b616b">总部展厅</div>
<div class="t " style="left:394.2px;top:266.0px;font-size:6.85px;transform:translateX(-50%);color:#5b616b">河南食堂</div>
<div class="t " style="left:459.0px;top:266.0px;font-size:6.85px;transform:translateX(-50%);color:#5b616b">晨检抽查记录</div>
<div class="t " style="left:524.2px;top:266.0px;font-size:6.85px;transform:translateX(-50%);color:#5b616b">1月15日张三晨...</div>
<div class="t " style="left:589.0px;top:266.0px;font-size:6.85px;transform:translateX(-50%);color:#5b616b">18722174631</div>
<svg class="abs" style="left:636.4px;top:260.6px;clip-path:inset(0 round 1.800px)" width="13.2" height="13.2" viewBox="0 0 13 13"><rect width="13" height="13" fill="#141516"/><rect x="9.800" y="3.800" width="3.200" height="5.400" fill="#a87645"/><rect x="10.600" y="4.600" width="2.400" height="3.400" fill="#f3d2a2"/></svg>
<div class="abs" style="left:150.4px;top:280.1px;width:574.6px;height:26px;background:#eaeff9"></div>
<div class="t " style="left:151.0px;top:292.0px;font-size:6.80px;color:#5b616b">9001</div>
<div class="t " style="left:202.8px;top:292.0px;font-size:6.85px;transform:translateX(-50%);color:#5b616b">2025-01-02</div>
<div class="t " style="left:264.4px;top:292.0px;font-size:6.85px;transform:translateX(-50%);color:#5b616b">10:56:25</div>
<div class="t " style="left:329.0px;top:292.0px;font-size:6.85px;transform:translateX(-50%);color:#5b616b">总部展厅</div>
<div class="t " style="left:394.2px;top:292.0px;font-size:6.85px;transform:translateX(-50%);color:#5b616b">总部展厅食堂</div>
<div class="t " style="left:459.0px;top:292.0px;font-size:6.85px;transform:translateX(-50%);color:#5b616b">员工行为规范抽...</div>
<div class="t " style="left:524.2px;top:292.0px;font-size:6.85px;transform:translateX(-50%);color:#5b616b">1楼餐厅厨师服...</div>
<div class="t " style="left:589.0px;top:292.0px;font-size:6.85px;transform:translateX(-50%);color:#5b616b">18722174631</div>
<svg class="abs" style="left:636.4px;top:286.6px;clip-path:inset(0 round 1.800px)" width="13.2" height="13.2" viewBox="0 0 13 13"><rect width="13" height="13" fill="#141516"/><rect x="9.800" y="3.800" width="3.200" height="5.400" fill="#a87645"/><rect x="10.600" y="4.600" width="2.400" height="3.400" fill="#f3d2a2"/></svg>
<div class="abs" style="left:150.4px;top:306.1px;width:574.6px;height:26px;background:#fff"></div>
<div class="t " style="left:151.0px;top:318.0px;font-size:6.80px;color:#5b616b">4002</div>
<div class="t " style="left:202.8px;top:318.0px;font-size:6.85px;transform:translateX(-50%);color:#5b616b">2024-12-28</div>
<div class="t " style="left:264.4px;top:318.0px;font-size:6.85px;transform:translateX(-50%);color:#5b616b">17:23:12</div>
<div class="t " style="left:329.0px;top:318.0px;font-size:6.85px;transform:translateX(-50%);color:#5b616b">总部展厅</div>
<div class="t " style="left:394.2px;top:318.0px;font-size:6.85px;transform:translateX(-50%);color:#5b616b">测试食堂</div>
<div class="t " style="left:459.0px;top:318.0px;font-size:6.85px;transform:translateX(-50%);color:#5b616b">冻货解冻记录</div>
<div class="t " style="left:524.2px;top:318.0px;font-size:6.85px;transform:translateX(-50%);color:#5b616b">测试一下</div>
<div class="t " style="left:589.0px;top:318.0px;font-size:6.85px;transform:translateX(-50%);color:#5b616b">18722174631</div>
<svg class="abs" style="left:636.4px;top:312.6px;clip-path:inset(0 round 1.800px)" width="13.2" height="13.2" viewBox="0 0 13 13"><rect width="13" height="13" fill="#eef1f6"/></svg>
<div class="abs" style="left:150.4px;top:332.1px;width:571.6px;height:26px;background:#eaeff9"></div>
<div class="t " style="left:151.0px;top:344.0px;font-size:6.80px;color:#5b616b">7001</div>
<div class="t " style="left:202.8px;top:344.0px;font-size:6.85px;transform:translateX(-50%);color:#5b616b">2024-12-28</div>
<div class="t " style="left:264.4px;top:344.0px;font-size:6.85px;transform:translateX(-50%);color:#5b616b">17:18:55</div>
<div class="t " style="left:329.0px;top:344.0px;font-size:6.85px;transform:translateX(-50%);color:#5b616b">总部展厅</div>
<div class="t " style="left:394.2px;top:344.0px;font-size:6.85px;transform:translateX(-50%);color:#5b616b">测试食堂</div>
<div class="t " style="left:459.0px;top:344.0px;font-size:6.85px;transform:translateX(-50%);color:#5b616b">熟食加工记录</div>
<div class="t " style="left:524.2px;top:344.0px;font-size:6.85px;transform:translateX(-50%);color:#5b616b">测试</div>
<div class="t " style="left:589.0px;top:344.0px;font-size:6.85px;transform:translateX(-50%);color:#5b616b">18722174631</div>
<svg class="abs" style="left:636.4px;top:338.6px;clip-path:inset(0 round 1.800px)" width="13.2" height="13.2" viewBox="0 0 13 13"><rect width="13" height="13" fill="#f1f3f8"/></svg>
<div class="abs" style="left:629.2px;top:124.0px;width:27.6px;height:26px;overflow:hidden"><div class="t th" style="left:0;top:12.0px;font-size:6.85px">附件照片</div></div>
<div class="abs" style="left:657.4px;top:124.2px;width:64.6px;height:26px;background:#e8ecef"></div>
<div class="t th" style="left:689.4px;top:136.0px;font-size:6.85px;transform:translateX(-50%);">操作</div>
<div class="abs" style="left:656.6px;top:124.5px;width:3px;height:240px;background:linear-gradient(90deg,rgba(60,70,90,.13),rgba(60,70,90,0))"></div>
<div class="t " style="left:672.6px;top:162.0px;font-size:6.70px;color:#4a76c0">编辑</div>
<div class="t " style="left:691.2px;top:162.0px;font-size:6.70px;color:#e5474b">删除</div>
<div class="t " style="left:672.6px;top:188.0px;font-size:6.70px;color:#4a76c0">编辑</div>
<div class="t " style="left:691.2px;top:188.0px;font-size:6.70px;color:#e5474b">删除</div>
<div class="t " style="left:672.6px;top:214.0px;font-size:6.70px;color:#4a76c0">编辑</div>
<div class="t " style="left:691.2px;top:214.0px;font-size:6.70px;color:#e5474b">删除</div>
<div class="t " style="left:672.6px;top:240.0px;font-size:6.70px;color:#4a76c0">编辑</div>
<div class="t " style="left:691.2px;top:240.0px;font-size:6.70px;color:#e5474b">删除</div>
<div class="t " style="left:672.6px;top:266.0px;font-size:6.70px;color:#4a76c0">编辑</div>
<div class="t " style="left:691.2px;top:266.0px;font-size:6.70px;color:#e5474b">删除</div>
<div class="t " style="left:672.6px;top:292.0px;font-size:6.70px;color:#4a76c0">编辑</div>
<div class="t " style="left:691.2px;top:292.0px;font-size:6.70px;color:#e5474b">删除</div>
<div class="t " style="left:672.6px;top:318.0px;font-size:6.70px;color:#4a76c0">编辑</div>
<div class="t " style="left:691.2px;top:318.0px;font-size:6.70px;color:#e5474b">删除</div>
<div class="t " style="left:672.6px;top:344.0px;font-size:6.70px;color:#4a76c0">编辑</div>
<div class="t " style="left:691.2px;top:344.0px;font-size:6.70px;color:#e5474b">删除</div>
<div class="abs" style="left:722.4px;top:150.1px;width:2.600px;height:178px;background:#cfd0d3"></div>
<div class="abs" style="left:225.0px;top:364.8px;width:490.0px;height:3px;border-radius:1.500px;background:#d6d6d8"></div>
<div class="t " style="left:345.4px;top:379.0px;font-size:6.90px;color:#5b616b">共 10 条</div>
<div class="inp" style="left:375.4px;top:374.6px;width:43.2px;height:11.8px"></div>
<div class="t " style="left:383.4px;top:379.0px;font-size:5.60px;color:#5b616b">10条/页</div>
<svg class="abs" style="left:410.6px;top:378.6px" width="5" height="4" viewBox="0 0 5 4"><path d="M.7 .8l1.800 1.800L4.300 .8" fill="none" stroke="#b8bec8" stroke-width=".6"/></svg>
<div class="abs" style="left:427.4px;top:374.6px;width:12.6px;height:11.8px;border-radius:1px;background:#f0f2f5"></div>
<svg class="abs" style="left:431.6px;top:378.0px" width="4" height="5" viewBox="0 0 4 5"><path d="M2.800 .6L1 2.500l1.800 1.900" fill="none" stroke="#b0b5be" stroke-width=".7"/></svg>
<div class="abs" style="left:444.6px;top:374.6px;width:12.8px;height:11.8px;border-radius:1px;background:#4470bd"></div>
<div class="t " style="left:451.0px;top:379.0px;font-size:6.20px;transform:translateX(-50%);color:#fff;font-weight:bold">1</div>
<div class="abs" style="left:462.0px;top:374.6px;width:12.6px;height:11.8px;border-radius:1px;background:#f0f2f5"></div>
<svg class="abs" style="left:466.4px;top:378.0px" width="4" height="5" viewBox="0 0 4 5"><path d="M1.200 .6L3 2.500 1.200 4.400" fill="none" stroke="#8a909a" stroke-width=".7"/></svg>
<div class="t " style="left:487.0px;top:379.0px;font-size:6.90px;color:#5b616b">前往</div>
<div class="inp" style="left:502.4px;top:374.6px;width:19px;height:11.8px"></div>
<div class="t " style="left:512.0px;top:379.0px;font-size:6.40px;transform:translateX(-50%);color:#5b616b">1</div>
<div class="t " style="left:524.0px;top:379.0px;font-size:6.90px;color:#5b616b">页</div>
</div><!--/web-->
<div class="pill" style="left:520.5px;top:446px;width:163px">web 端自定义台账</div>

</body>
</html>
